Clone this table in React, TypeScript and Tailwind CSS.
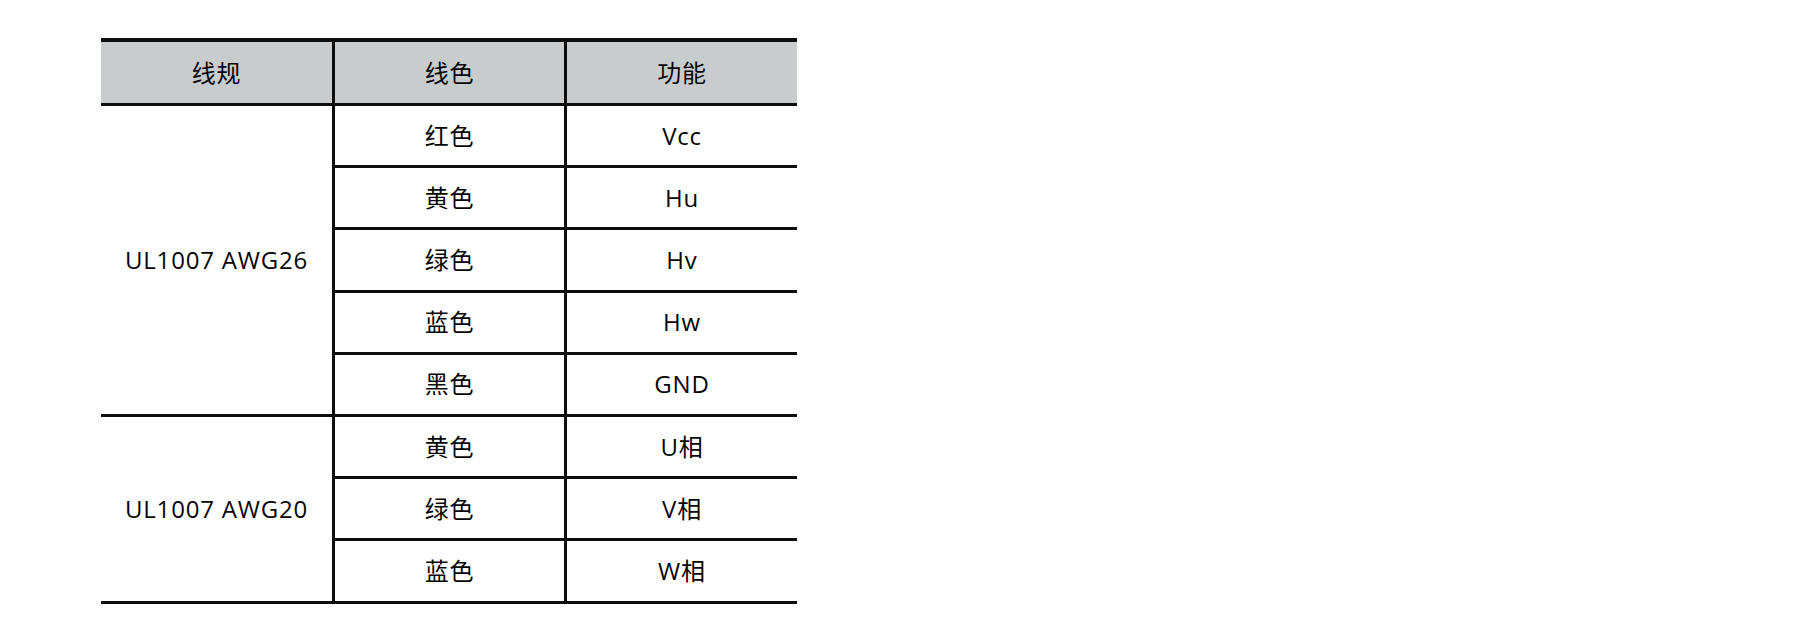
import React from "react";

const groups = [
  {
    gauge: "UL1007 AWG26",
    rows: [
      ["红色", "Vcc"],
      ["黄色", "Hu"],
      ["绿色", "Hv"],
      ["蓝色", "Hw"],
      ["黑色", "GND"],
    ],
  },
  {
    gauge: "UL1007 AWG20",
    rows: [
      ["黄色", "U相"],
      ["绿色", "V相"],
      ["蓝色", "W相"],
    ],
  },
];

export default function App() {
  return (
    <div
      className="w-[1800px] h-[640px] bg-white text-[#050505] pt-[38px] pl-[101px]"
      style={{ fontFamily: '"Open Sans", "Noto Sans CJK SC", sans-serif' }}
    >
      <div className="w-[696px] border-t-[4px] border-b-[3px] border-[#0d0d0d] text-[24px] leading-none tracking-[0.8px]">
        <div className="flex h-[61px] bg-[#c9cccd]">
          <div className="w-[234px] border-r-[3px] border-[#0d0d0d] flex items-center justify-center">线规</div>
          <div className="w-[232px] border-r-[3px] border-[#0d0d0d] flex items-center justify-center">线色</div>
          <div className="flex-1 flex items-center justify-center">功能</div>
        </div>
        {groups.map((g) => (
          <div key={g.gauge} className="flex border-t-[3px] border-[#0d0d0d]">
            <div className="w-[234px] border-r-[3px] border-[#0d0d0d] flex items-center justify-center">
              {g.gauge}
            </div>
            <div className="flex-1 flex flex-col">
              {g.rows.map(([c, f], i) => (
                <div
                  key={i}
                  className={
                    i === 0
                      ? "flex h-[59.2px]"
                      : "flex h-[62.2px] border-t-[3px] border-[#0d0d0d]"
                  }
                >
                  <div className="w-[232px] border-r-[3px] border-[#0d0d0d] flex items-center justify-center">{c}</div>
                  <div className="flex-1 flex items-center justify-center">{f}</div>
                </div>
              ))}
            </div>
          </div>
        ))}
      </div>
    </div>
  );
}
